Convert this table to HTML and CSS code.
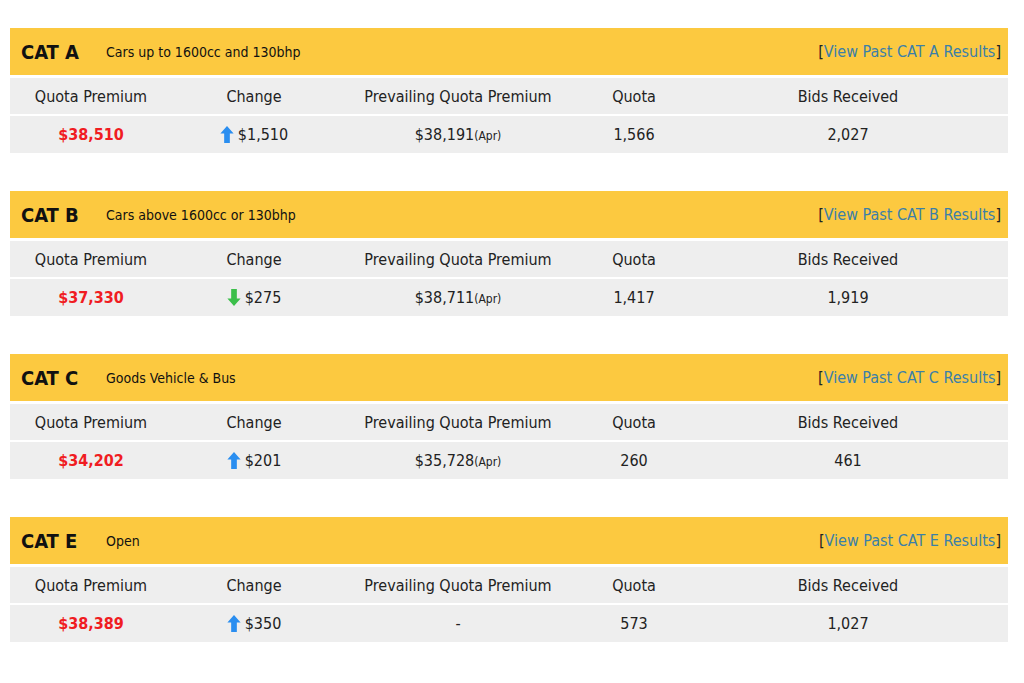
FILE: index.html
```html
<!DOCTYPE html>
<html>
<head>
<meta charset="utf-8">
<link rel="stylesheet" href="styles.css">
</head>
<body>
<div class="page">
  <section class="panel">
    <div class="bar">
      <span class="cat">CAT A</span><span class="desc">Cars up to 1600cc and 130bhp</span>
      <span class="link">[<a href="#">View Past CAT A Results</a>]</span>
    </div>
    <div class="row head"><div>Quota Premium</div><div>Change</div><div>Prevailing Quota Premium</div><div>Quota</div><div>Bids Received</div></div>
    <div class="row data"><div class="qp">$38,510</div><div class="chg"><svg class="arr up" viewBox="0 0 14 18"><path d="M7 0 L14 8 L10 8 L10 18 L4 18 L4 8 L0 8 Z"/></svg>$1,510</div><div>$38,191<small>(Apr)</small></div><div>1,566</div><div>2,027</div></div>
  </section>
  <section class="panel">
    <div class="bar">
      <span class="cat">CAT B</span><span class="desc">Cars above 1600cc or 130bhp</span>
      <span class="link">[<a href="#">View Past CAT B Results</a>]</span>
    </div>
    <div class="row head"><div>Quota Premium</div><div>Change</div><div>Prevailing Quota Premium</div><div>Quota</div><div>Bids Received</div></div>
    <div class="row data"><div class="qp">$37,330</div><div class="chg"><svg class="arr down" viewBox="0 0 14 18"><path d="M7 18 L14 10 L10 10 L10 0 L4 0 L4 10 L0 10 Z"/></svg>$275</div><div>$38,711<small>(Apr)</small></div><div>1,417</div><div>1,919</div></div>
  </section>
  <section class="panel">
    <div class="bar">
      <span class="cat">CAT C</span><span class="desc">Goods Vehicle &amp; Bus</span>
      <span class="link">[<a href="#">View Past CAT C Results</a>]</span>
    </div>
    <div class="row head"><div>Quota Premium</div><div>Change</div><div>Prevailing Quota Premium</div><div>Quota</div><div>Bids Received</div></div>
    <div class="row data"><div class="qp">$34,202</div><div class="chg"><svg class="arr up" viewBox="0 0 14 18"><path d="M7 0 L14 8 L10 8 L10 18 L4 18 L4 8 L0 8 Z"/></svg>$201</div><div>$35,728<small>(Apr)</small></div><div>260</div><div>461</div></div>
  </section>
  <section class="panel">
    <div class="bar">
      <span class="cat">CAT E</span><span class="desc">Open</span>
      <span class="link">[<a href="#">View Past CAT E Results</a>]</span>
    </div>
    <div class="row head"><div>Quota Premium</div><div>Change</div><div>Prevailing Quota Premium</div><div>Quota</div><div>Bids Received</div></div>
    <div class="row data"><div class="qp">$38,389</div><div class="chg"><svg class="arr up" viewBox="0 0 14 18"><path d="M7 0 L14 8 L10 8 L10 18 L4 18 L4 8 L0 8 Z"/></svg>$350</div><div>-</div><div>573</div><div>1,027</div></div>
  </section>
</div>
</body>
</html>
```
FILE: styles.css
```css
html, body {
  margin: 0;
  padding: 0;
  background: #fff;
}
body {
  font-family: "DejaVu Sans Condensed", "DejaVu Sans", sans-serif;
  color: #222;
}
.page {
  padding: 28px 16px 0 10px;
  display: flex;
  flex-direction: column;
  gap: 38px;
}
.panel {
  display: flex;
  flex-direction: column;
  gap: 2px;
}
.bar {
  background: #fcc940;
  height: 47px;
  display: flex;
  align-items: center;
  padding: 0 7px 0 11px;
  margin-bottom: 1px;
}
.cat {
  font-weight: bold;
  font-size: 20px;
  color: #111;
  width: 85px;
}
.desc {
  font-size: 14px;
  color: #111;
}
.link {
  margin-left: auto;
  font-size: 16px;
  color: #222;
}
.link a {
  color: #3b7fa8;
  text-decoration: none;
}
.row {
  display: grid;
  grid-template-columns: 162px 164px 244px 108px 1fr;
  background: #eeeeee;
  align-items: center;
  font-size: 16px;
  text-align: center;
}
.row.head {
  height: 36px;
}
.row.data {
  height: 37px;
}
.qp {
  color: #f01c22;
  font-weight: bold;
}
.chg {
  display: flex;
  justify-content: center;
  align-items: center;
  gap: 4px;
}
.arr {
  width: 14px;
  height: 17px;
}
.arr.up { fill: #2a8ef0; }
.arr.down { fill: #3bbf4a; }
small {
  font-size: 12px;
}
```
